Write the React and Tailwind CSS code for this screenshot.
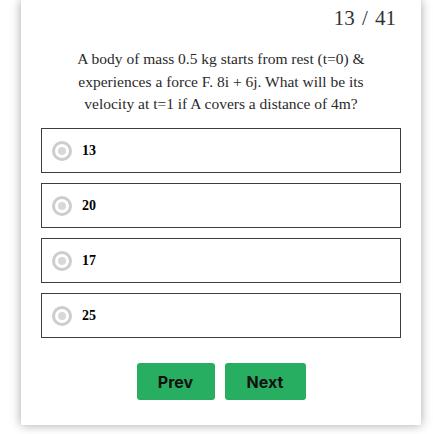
const options = ['13', '20', '17', '25'];

export default function App() {
  return (
    <div className="min-h-[434px] bg-white overflow-hidden">
      <div className="ml-[21px] w-[400px] bg-white shadow-[0_0_10px_rgba(0,0,0,0.35)] px-5 pb-[25px]">
        {/* Counter */}
        <div
          className="text-right pr-[5px] pt-[6px] text-[21px] leading-[24px] text-[#333] [word-spacing:2px]"
          style={{ fontFamily: '"Liberation Serif", serif' }}
        >
          13 / 41
        </div>

        {/* Question */}
        <p
          className="mt-[18px] mx-auto w-[312px] text-center text-[15.5px] leading-[22.7px] text-[#2a2a2a]"
          style={{ fontFamily: '"Liberation Serif", serif' }}
        >
          A body of mass 0.5 kg starts from rest (t=0) &amp; experiences a force F. 8i + 6j. What will be its velocity at t=1 if A covers a distance of 4m?
        </p>

        {/* Options */}
        <div className="mt-[12px] flex flex-col gap-[10px]">
          {options.map((opt) => (
            <label
              key={opt}
              className="h-[45px] flex items-center gap-[10px] pl-[10px] border border-[#3d3d3d] bg-white"
            >
              <span className="w-5 h-5 rounded-full border-[3px] border-[#cdcdcd] bg-white flex items-center justify-center shrink-0">
                <span className="w-[8px] h-[8px] rounded-full bg-[#d8d8d8]" />
              </span>
              <span
                className="text-[14px] font-bold text-black"
                style={{ fontFamily: '"Liberation Serif", serif' }}
              >
                {opt}
              </span>
            </label>
          ))}
        </div>

        {/* Buttons */}
        <div className="mt-[25px] flex justify-center gap-[10px]" style={{ fontFamily: 'Inter, sans-serif' }}>
          <button className="w-[78px] h-[37px] rounded-[3px] bg-[#27ae60] text-[16px] font-bold text-[#111]">
            Prev
          </button>
          <button className="w-[81px] h-[37px] rounded-[3px] bg-[#27ae60] text-[16px] font-bold text-[#111]">
            Next
          </button>
        </div>
      </div>
    </div>
  );
}
